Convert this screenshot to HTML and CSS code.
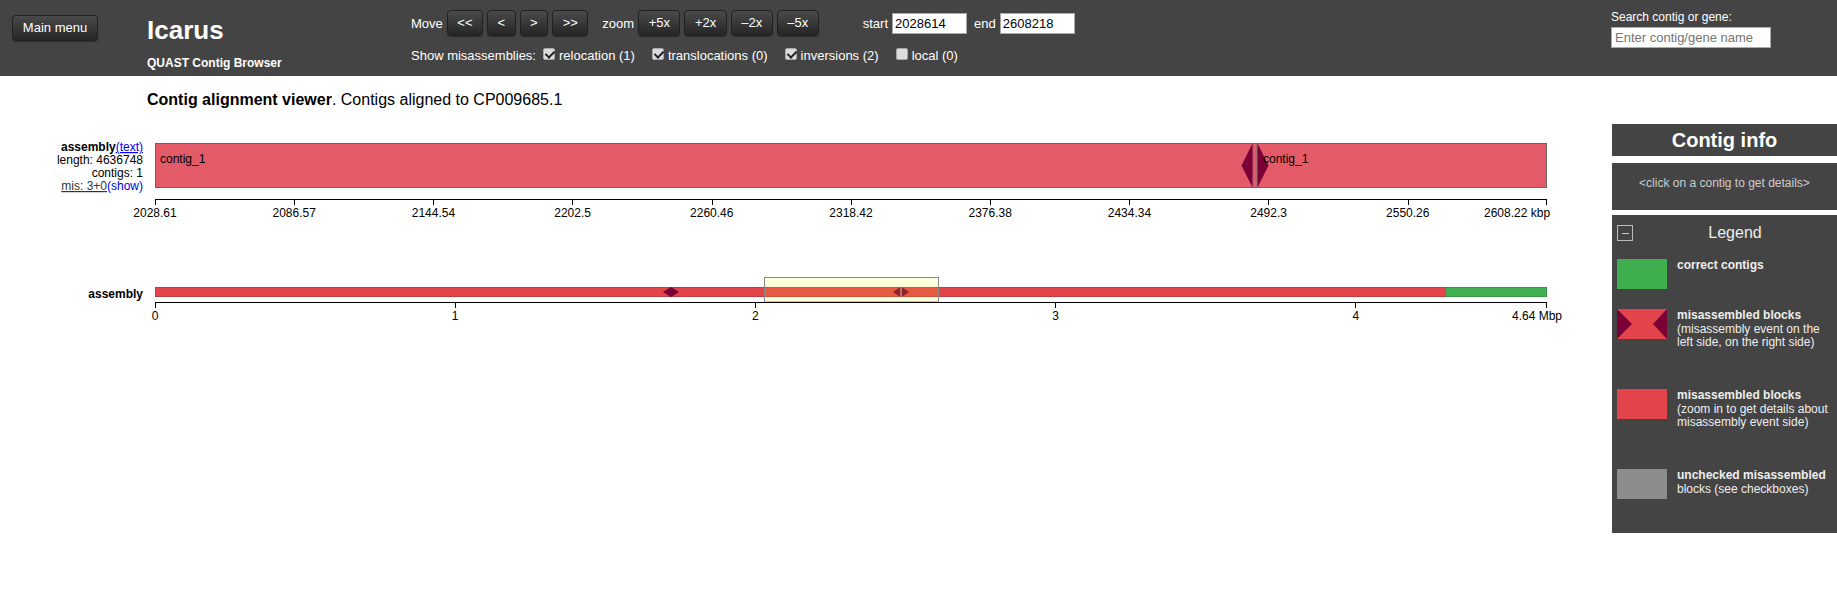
FILE: index.html
```html
<!DOCTYPE html>
<html lang="en">
<head>
<meta charset="utf-8">
<title>Icarus - QUAST Contig Browser</title>
<link rel="stylesheet" href="styles.css">
</head>
<body>
<header class="topbar">
  <div class="menu-wrap"><button class="btn menu-btn">Main menu</button></div>
  <div class="brand">
    <h1 class="brand-title">Icarus</h1>
    <div class="brand-sub">QUAST Contig Browser</div>
  </div>
  <div class="controls">
    <div class="row-nav">
      <span>Move</span>
      <button class="btn">&lt;&lt;</button>
      <button class="btn">&lt;</button>
      <button class="btn">&gt;</button>
      <button class="btn">&gt;&gt;</button>
      <span class="lbl-zoom">zoom</span>
      <button class="btn">+5x</button>
      <button class="btn">+2x</button>
      <button class="btn">&#8211;2x</button>
      <button class="btn">&#8211;5x</button>
      <span class="lbl-start">start</span>
      <input class="pos" type="text" value="2028614">
      <span class="lbl-end">end</span>
      <input class="pos" type="text" value="2608218">
    </div>
    <div class="row-mis">
      <span>Show misassemblies:</span>
      <label class="mis-opt first"><input class="chk" type="checkbox" checked>relocation (1)</label>
      <label class="mis-opt"><input class="chk" type="checkbox" checked>translocations (0)</label>
      <label class="mis-opt"><input class="chk" type="checkbox" checked>inversions (2)</label>
      <label class="mis-opt"><input class="chk" type="checkbox">local (0)</label>
    </div>
  </div>
  <div class="search">
    <div>Search contig or gene:</div>
    <input class="search-input" type="text" placeholder="Enter contig/gene name">
  </div>
</header>

<main class="main">
  <section class="viewer">
    <h2 class="viewer-title"><b>Contig alignment viewer</b>. Contigs aligned to CP009685.1</h2>
    <svg class="chart" width="1612" height="231" viewBox="0 109 1612 231" xmlns="http://www.w3.org/2000/svg">
      <!-- detailed track labels -->
      <text class="t12" x="143" y="151" text-anchor="end"><tspan class="bold">assembly</tspan><tspan class="link">(text)</tspan></text>
      <text class="t12" x="143" y="164" text-anchor="end">length: 4636748</text>
      <text class="t12" x="143" y="177" text-anchor="end">contigs: 1</text>
      <text class="t12" x="143" y="190" text-anchor="end"><tspan class="under">mis: 3+0</tspan><tspan class="link-plain">(show)</tspan></text>

      <!-- detailed track -->
      <rect x="155.5" y="143.5" width="1391" height="44" fill="#e35a69" stroke="#666" stroke-width="1"/>
      <line x1="1253" y1="143.5" x2="1253" y2="187.5" stroke="#777" stroke-width="1"/>
      <line x1="1257" y1="143.5" x2="1257" y2="187.5" stroke="#777" stroke-width="1"/>
      <polygon points="1241.5,165.5 1252.5,143.5 1252.5,187.5" fill="#7b0036"/>
      <polygon points="1257.5,143.5 1268.5,165.5 1257.5,187.5" fill="#7b0036"/>
      <text class="t12" x="160" y="163">contig_1</text>
      <text class="t12" x="1263" y="163">contig_1</text>

      <!-- detailed axis -->
      <path d="M155 199.5H1547" stroke="#000" stroke-width="1" fill="none"/>
      <path d="M155.5 199V205 M294.5 199V205 M433.5 199V205 M572.5 199V205 M712.5 199V205 M851.5 199V205 M990.5 199V205 M1129.5 199V205 M1268.5 199V205 M1408.5 199V205 M1546.5 199V205" stroke="#000" stroke-width="1" fill="none"/>
      <g class="t12" text-anchor="middle">
        <text x="155" y="217">2028.61</text>
        <text x="294.2" y="217">2086.57</text>
        <text x="433.4" y="217">2144.54</text>
        <text x="572.6" y="217">2202.5</text>
        <text x="711.8" y="217">2260.46</text>
        <text x="851" y="217">2318.42</text>
        <text x="990.2" y="217">2376.38</text>
        <text x="1129.4" y="217">2434.34</text>
        <text x="1268.6" y="217">2492.3</text>
        <text x="1407.8" y="217">2550.26</text>
      </g>
      <text class="t12" x="1484" y="217">2608.22 kbp</text>

      <!-- overview track -->
      <text class="t12 bold" x="143" y="298" text-anchor="end">assembly</text>
      <rect x="155" y="287" width="1291" height="10" fill="#e3434b"/>
      <rect x="1446" y="287" width="101" height="10" fill="#41ae4f"/>
      <rect x="155.5" y="287.5" width="1391" height="9" fill="none" stroke="rgba(0,0,0,0.12)" stroke-width="1"/>
      <polygon points="663,292 671,287 679,292 671,297" fill="#7b0036"/>
      <polygon points="893,292 900.3,287 900.3,297" fill="#7b0036"/>
      <polygon points="901.7,287 909,292 901.7,297" fill="#7b0036"/>
      <line x1="901" y1="287" x2="901" y2="297" stroke="#999" stroke-width="1"/>
      <rect x="764.5" y="277.5" width="174" height="24.5" fill="#ffff00" fill-opacity="0.13" stroke="#888" stroke-width="1"/>

      <!-- overview axis -->
      <path d="M155 302.5H1547" stroke="#000" stroke-width="1" fill="none"/>
      <path d="M155.5 302V308 M455.5 302V308 M755.5 302V308 M1055.5 302V308 M1355.5 302V308 M1546.5 302V308" stroke="#000" stroke-width="1" fill="none"/>
      <g class="t12" text-anchor="middle">
        <text x="155" y="320">0</text>
        <text x="455.2" y="320">1</text>
        <text x="755.4" y="320">2</text>
        <text x="1055.6" y="320">3</text>
        <text x="1355.8" y="320">4</text>
      </g>
      <text class="t12" x="1512" y="320">4.64 Mbp</text>
    </svg>
  </section>

  <aside class="side">
    <div class="info-head">Contig info</div>
    <div class="info-body">&lt;click on a contig to get details&gt;</div>
    <div class="legend">
      <div class="legend-head">
        <span class="legend-toggle"><span class="legend-dash"></span></span>
        <span class="legend-title">Legend</span>
      </div>
      <div class="legend-item item-correct">
        <span class="swatch sw-green"></span>
        <div class="legend-text"><b>correct contigs</b></div>
      </div>
      <div class="legend-item item-tall">
        <svg class="swatch" width="50" height="30" viewBox="0 0 50 30" xmlns="http://www.w3.org/2000/svg">
          <rect width="50" height="30" fill="#e3434b"/>
          <polygon points="0,0 15,15 0,30" fill="#7b0036"/>
          <polygon points="50,0 36,15 50,30" fill="#7b0036"/>
        </svg>
        <div class="legend-text"><b>misassembled blocks</b><br>(misassembly event on the left side, on the right side)</div>
      </div>
      <div class="legend-item item-tall">
        <span class="swatch sw-red"></span>
        <div class="legend-text"><b>misassembled blocks</b><br>(zoom in to get details about misassembly event side)</div>
      </div>
      <div class="legend-item">
        <span class="swatch sw-grey"></span>
        <div class="legend-text"><b>unchecked misassembled</b> blocks (see checkboxes)</div>
      </div>
    </div>
  </aside>
</main>
</body>
</html>
```

FILE: styles.css
```css
* {
  box-sizing: border-box;
}

body {
  margin: 0;
  font-family: "Liberation Sans", Arial, sans-serif;
  background: #fff;
  color: #000;
}

/* ---------- top bar ---------- */
.topbar {
  display: flex;
  align-items: flex-start;
  height: 76px;
  background: #444;
  color: #fff;
}

.menu-wrap {
  margin: 15px 0 0 12px;
}

.btn {
  height: 26px;
  padding: 0 9.5px;
  border: 1px solid #222;
  border-radius: 4px;
  background: linear-gradient(#4a4a4a, #262626);
  color: #fff;
  font-family: "Liberation Sans", Arial, sans-serif;
  font-size: 13px;
  line-height: 24px;
  box-shadow: 0 1px 1px rgba(0, 0, 0, 0.35);
  cursor: pointer;
}

.menu-btn {
  width: 86px;
  padding: 0;
}

.brand {
  flex: 0 0 264px;
  margin-left: 49px;
  padding-top: 15px;
}

.brand-title {
  margin: 0;
  font-size: 26px;
  line-height: 30px;
  font-weight: bold;
}

.brand-sub {
  margin-top: 11px;
  font-size: 12px;
  line-height: 14px;
  font-weight: bold;
}

.controls {
  padding-top: 10px;
  font-size: 13px;
}

.row-nav {
  display: flex;
  align-items: center;
  gap: 4px;
  height: 26px;
}

.lbl-zoom {
  margin-left: 10px;
}

.lbl-start {
  margin-left: 40px;
}

.lbl-end {
  margin-left: 3px;
}

.pos {
  width: 75px;
  height: 21px;
  border: 1px solid #a9a9a9;
  padding: 1px 2px;
  font-family: "Liberation Sans", Arial, sans-serif;
  font-size: 13px;
  color: #000;
  background: #fff;
}

.row-mis {
  display: flex;
  align-items: flex-start;
  margin-top: 12px;
  line-height: 16px;
}

.mis-opt {
  display: flex;
  align-items: flex-start;
  margin-left: 17px;
}

.mis-opt.first {
  margin-left: 7px;
}

.chk {
  appearance: none;
  -webkit-appearance: none;
  position: relative;
  width: 12px;
  height: 12px;
  margin: 0 4px 0 0;
  background: #dcdcdc;
  border: 1px solid #a8a8a8;
  border-radius: 2px;
}

.chk:checked::after {
  content: "";
  position: absolute;
  left: 3px;
  top: 0;
  width: 4px;
  height: 7px;
  border: solid #222;
  border-width: 0 2px 2px 0;
  transform: rotate(45deg);
}

.search {
  margin-left: auto;
  width: 226px;
  padding-top: 10px;
  font-size: 12px;
  line-height: 14px;
}

.search-input {
  display: block;
  margin-top: 3px;
  width: 160px;
  height: 21px;
  border: 1px solid #a9a9a9;
  padding: 1px 3px;
  font-family: "Liberation Sans", Arial, sans-serif;
  font-size: 13px;
  background: #fff;
}

.search-input::placeholder {
  color: #757575;
}

/* ---------- main ---------- */
.main {
  display: flex;
  align-items: flex-start;
}

.viewer {
  flex: 0 0 1612px;
}

.viewer-title {
  margin: 15px 0 0 147px;
  font-size: 16px;
  line-height: 18px;
  font-weight: normal;
}

.chart {
  display: block;
}

.t12 {
  font-family: "Liberation Sans", Arial, sans-serif;
  font-size: 12px;
  fill: #000;
}

.bold {
  font-weight: bold;
}

.link {
  fill: #0000ee;
  text-decoration: underline;
}

.link-plain {
  fill: #0000ee;
}

.under {
  fill: #333;
  text-decoration: underline;
}

/* ---------- side panel ---------- */
.side {
  flex: 0 0 225px;
  margin-top: 48px;
}

.info-head {
  height: 32px;
  background: #444;
  color: #fff;
  font-size: 20px;
  font-weight: bold;
  line-height: 32px;
  text-align: center;
}

.info-body {
  margin-top: 7px;
  height: 47px;
  padding-top: 13px;
  background: #444;
  color: #ccc;
  font-size: 12px;
  line-height: 14px;
  text-align: center;
}

.legend {
  margin-top: 5px;
  height: 318px;
  padding: 10px 0 0 5px;
  background: #444;
  color: #eee;
}

.legend-head {
  display: flex;
  align-items: center;
  height: 16px;
}

.legend-toggle {
  display: flex;
  align-items: center;
  justify-content: center;
  width: 16px;
  height: 16px;
  border: 1px solid #bbb;
}

.legend-dash {
  width: 7px;
  height: 1px;
  background: #ccc;
}

.legend-title {
  flex: 1;
  text-align: center;
  font-size: 16px;
  line-height: 16px;
}

.legend-item {
  display: flex;
  align-items: flex-start;
}

.item-correct {
  margin-top: 18px;
  height: 50px;
}

.item-tall {
  height: 80px;
}

.swatch {
  display: block;
  flex: 0 0 50px;
  width: 50px;
  height: 30px;
  margin-right: 10px;
}

.sw-green {
  background: #3fae4f;
}

.sw-red {
  background: #e3434b;
}

.sw-grey {
  background: #8c8c8c;
}

.legend-text {
  width: 158px;
  font-size: 12px;
  line-height: 13.5px;
}
```
